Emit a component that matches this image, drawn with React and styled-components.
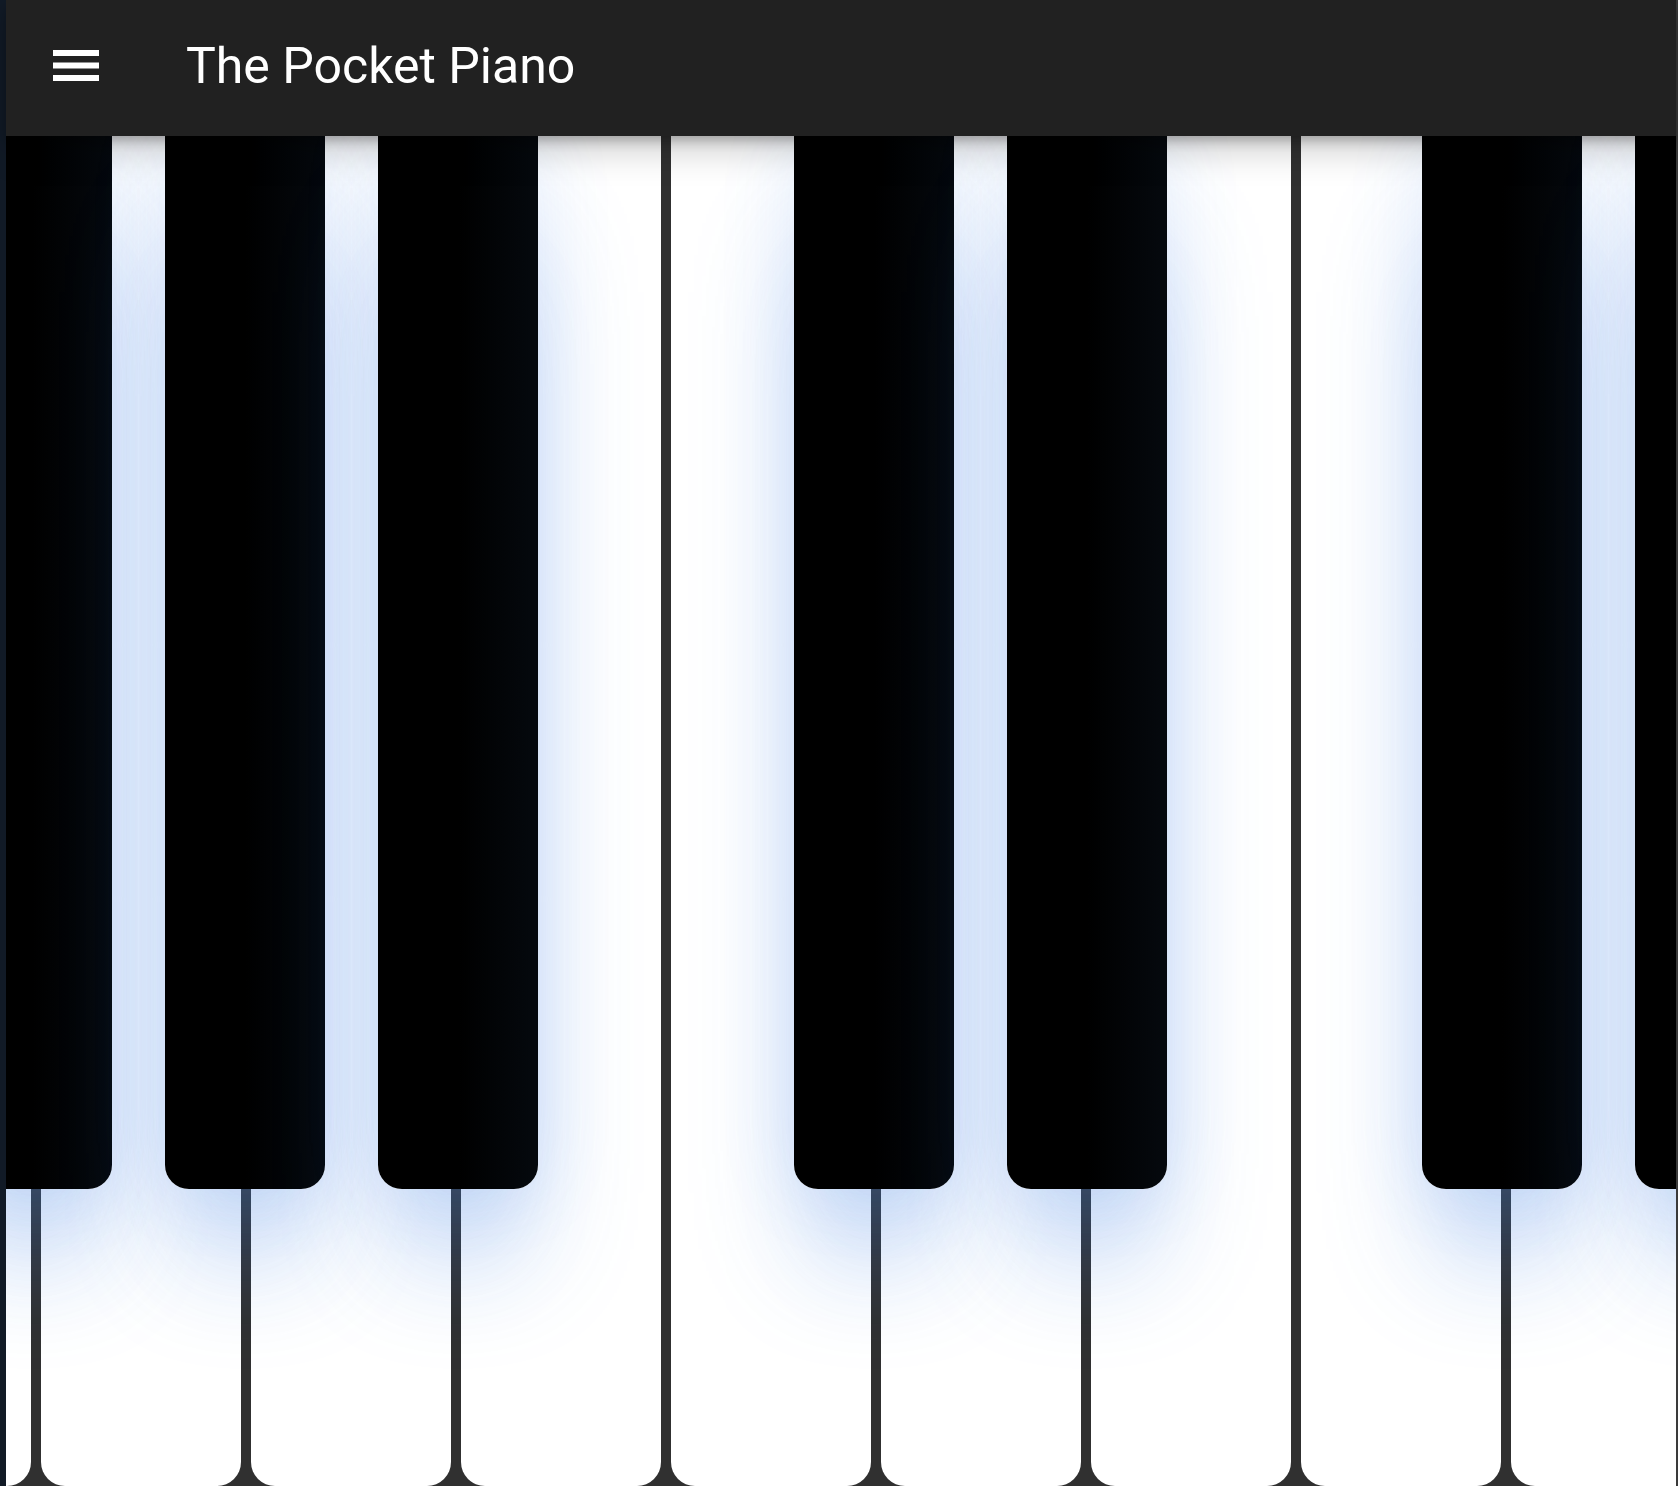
import React, { useLayoutEffect, useRef } from "react";
import styled, { createGlobalStyle } from "styled-components";

const GlobalStyle = createGlobalStyle`
  html, body {
    margin: 0;
    padding: 0;
    height: 100%;
    overflow: hidden;
    background: #111a26;
    font-family: Roboto, "Noto Sans", "Liberation Sans", sans-serif;
  }
  #root { height: 100%; }
`;

const Frame = styled.div`
  display: flex;
  flex-direction: column;
  height: 100vh;
  margin-left: 6px;
  border-right: 2px solid #3a3a3a;
  box-sizing: border-box;
`;

const AppBar = styled.header`
  position: relative;
  z-index: 2;
  flex: none;
  display: flex;
  align-items: center;
  height: 136px;
  padding: 0 0 5px 47px;
  box-sizing: border-box;
  background: #212121;
  color: #fff;
  box-shadow: 0 6px 12px -2px rgba(0, 0, 0, 0.28), 0 14px 34px rgba(0, 0, 0, 0.2);
`;

const MenuButton = styled.button`
  display: flex;
  align-items: center;
  justify-content: center;
  padding: 0;
  border: 0;
  background: transparent;
  color: #fff;
  cursor: pointer;
`;

const Title = styled.h1`
  margin: 0 0 0 87px;
  font-family: Roboto, "Noto Sans", sans-serif;
  font-size: 50px;
  font-weight: 400;
  letter-spacing: 0;
  color: #fff;
`;

const Keyboard = styled.main`
  position: relative;
  flex: 1;
  overflow-x: auto;
  overflow-y: hidden;
  background: #303030;
  scrollbar-width: none;
  &::-webkit-scrollbar { display: none; }
`;

const Track = styled.div`
  display: flex;
  gap: 10px;
  height: 100%;
  width: max-content;
`;

const WhiteKey = styled.div`
  position: relative;
  flex: none;
  width: 200px;
  height: 100%;
  background: #fff;
  border-radius: 0 0 24px 24px;
`;

const BlackKey = styled.div`
  position: absolute;
  z-index: 1;
  top: 0;
  left: ${(p) => 125 + p.$shift}px;
  width: 160px;
  height: 78%;
  background: linear-gradient(to right, #000 0%, #000 50%, #05090e 100%);
  border-radius: 0 0 24px 24px;
  box-shadow:
    0 0 80px rgba(70, 135, 228, 0.12),
    0 80px 120px -20px rgba(70, 135, 228, 0.32),
    0 110px 110px -50px rgba(70, 135, 228, 0.2);
`;

const NAMES = ["C", "D", "E", "F", "G", "A", "B"];
/* sharp after each natural, with its offset from the gap centre (like a real keyboard) */
const SHARP_SHIFT = { C: -2, D: 1, E: null, F: -4, G: -1, A: 2, B: null };

const keys = Array.from({ length: 22 }, (_, i) => {
  const name = NAMES[i % 7];
  const octave = 3 + Math.floor(i / 7);
  const shift = i < 21 ? SHARP_SHIFT[name] : null;
  return { id: `${name}${octave}`, name, shift };
});

function MenuIcon() {
  return (
    <svg width="46" height="31" viewBox="0 0 46 31" aria-hidden="true">
      <rect x="0" y="0" width="46" height="6" fill="currentColor" />
      <rect x="0" y="12.5" width="46" height="6" fill="currentColor" />
      <rect x="0" y="25" width="46" height="6" fill="currentColor" />
    </svg>
  );
}

export default function App() {
  const boardRef = useRef(null);

  useLayoutEffect(() => {
    if (boardRef.current) boardRef.current.scrollLeft = 805;
  }, []);

  return (
    <>
      <GlobalStyle />
      <Frame>
        <AppBar>
          <MenuButton aria-label="menu">
            <MenuIcon />
          </MenuButton>
          <Title>The Pocket Piano</Title>
        </AppBar>
        <Keyboard ref={boardRef}>
          <Track>
            {keys.map((k) => (
              <WhiteKey key={k.id} data-note={k.id}>
                {k.shift !== null && (
                  <BlackKey $shift={k.shift} data-note={`${k.name}#`} />
                )}
              </WhiteKey>
            ))}
          </Track>
        </Keyboard>
      </Frame>
    </>
  );
}
